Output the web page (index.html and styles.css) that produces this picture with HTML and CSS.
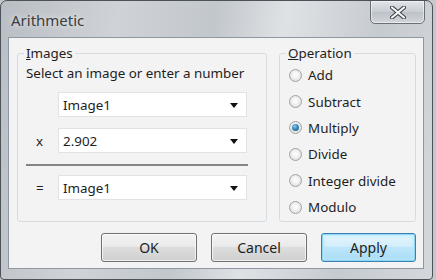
FILE: index.html
```html
<!DOCTYPE html>
<html lang="en">
<head>
    <meta charset="UTF-8">
    <meta name="viewport" content="width=device-width, initial-scale=1.0">
    <title>Arithmetic</title>
    <link rel="stylesheet" href="styles.css">
</head>
<body>
    <div class="window">
        <div class="titlebar">
            <span class="title">Arithmetic</span>
            <button class="close-btn" aria-label="Close">
                <svg width="16" height="13" viewBox="0 0 16 13">
                    <path d="M2 1.5 L14 11.5 M14 1.5 L2 11.5" stroke="#3d4147" stroke-width="4.2" stroke-linecap="round"/>
                    <path d="M2 1.5 L14 11.5 M14 1.5 L2 11.5" stroke="#f4f5f6" stroke-width="2.2" stroke-linecap="round"/>
                </svg>
            </button>
        </div>

        <div class="client">
            <div class="groups">
                <fieldset class="group images-group">
                    <legend><u>I</u>mages</legend>
                    <p class="hint">Select an image or enter a number</p>

                    <div class="operand-row first">
                        <span class="op"></span>
                        <div class="combo"><span>Image1</span><i class="arrow"></i></div>
                    </div>
                    <div class="operand-row">
                        <span class="op">x</span>
                        <div class="combo"><span>2.902</span><i class="arrow"></i></div>
                    </div>
                    <div class="separator"></div>
                    <div class="operand-row result">
                        <span class="op">=</span>
                        <div class="combo"><span>Image1</span><i class="arrow"></i></div>
                    </div>
                </fieldset>

                <fieldset class="group operation-group">
                    <legend><u>O</u>peration</legend>
                    <label class="radio"><span class="dot"></span>Add</label>
                    <label class="radio"><span class="dot"></span>Subtract</label>
                    <label class="radio"><span class="dot checked"></span>Multiply</label>
                    <label class="radio"><span class="dot"></span>Divide</label>
                    <label class="radio"><span class="dot"></span>Integer divide</label>
                    <label class="radio"><span class="dot"></span>Modulo</label>
                </fieldset>
            </div>

            <div class="buttons">
                <button class="btn">OK</button>
                <button class="btn">Cancel</button>
                <button class="btn default">Apply</button>
            </div>
        </div>
    </div>
</body>
</html>
```

FILE: styles.css
```css
body {
    margin: 0;
    background-color: #c4c8cc;
    font-family: "Noto Sans", "Open Sans", sans-serif;
    font-size: 13.4px;
    color: #1e1e1e;
}

.window {
    width: 433px;
    height: 280px;
    box-sizing: border-box;
    border: 1px solid #4c5259;
    border-radius: 7px 7px 4px 4px;
    background: linear-gradient(100deg, #b9bec4 0%, #cfd3d7 25%, #c2c7cc 45%, #dfe2e5 60%, #c6cbd0 80%, #d4d8dc 100%);
    padding: 0 8px 10px 7px;
    overflow: hidden;
}

.titlebar {
    height: 36px;
    display: flex;
    align-items: flex-start;
    justify-content: space-between;
}

.title {
    margin: 9px 0 0 3px;
    font-size: 15px;
    color: #3a3d41;
    text-shadow: 0 0 6px rgba(255, 255, 255, 0.8);
}

.close-btn {
    width: 55px;
    height: 24px;
    margin: -1px -1px 0 0;
    border: 1px solid #6a7077;
    border-radius: 0 0 5px 5px;
    background: linear-gradient(#e2e5e8, #c8cdd2 50%, #bcc2c8 51%, #d2d6da);
    box-shadow: inset 0 0 0 1px rgba(255, 255, 255, 0.5);
    display: flex;
    align-items: center;
    justify-content: center;
    padding: 0;
}

.client {
    height: 232px;
    box-sizing: border-box;
    border: 1px solid #8d98a3;
    background-color: #f3f3f3;
    padding: 7px 7px 0 8px;
}

.groups {
    display: flex;
    gap: 12px;
    height: 177px;
}

.group {
    margin: 0;
    border: 1px solid #d6dde2;
    border-radius: 3px;
    box-sizing: border-box;
    min-width: 0;
    padding: 0 0 0 8px;
}

.group legend {
    padding: 0 2px;
    margin-left: -2px;
    line-height: 16px;
}

.images-group {
    width: 252px;
}

.operation-group {
    width: 138px;
}

.hint {
    margin: 3px 0 0;
    line-height: 18px;
}

.operand-row {
    display: flex;
    align-items: center;
    margin-top: 11px;
}

.operand-row.first {
    margin-top: 10px;
}

.operand-row.result {
    margin-top: 9px;
}

.op {
    width: 32px;
    padding-left: 10px;
    box-sizing: border-box;
}

.combo {
    width: 189px;
    height: 25px;
    box-sizing: border-box;
    border: 1px solid #e2e2e2;
    background-color: #fff;
    display: flex;
    align-items: center;
    justify-content: space-between;
    padding: 0 8px 0 4px;
}

.arrow {
    width: 0;
    height: 0;
    border-left: 4px solid transparent;
    border-right: 4px solid transparent;
    border-top: 5px solid #111;
    margin-top: 1px;
}

.separator {
    width: 222px;
    height: 2px;
    margin-top: 11px;
    background-color: #858585;
}

.radio {
    display: flex;
    align-items: center;
    height: 26.4px;
    gap: 6px;
    padding-left: 1px;
}

.radio:first-of-type {
    margin-top: 1px;
}

.dot {
    width: 13px;
    height: 13px;
    box-sizing: border-box;
    border-radius: 50%;
    border: 1px solid #a2a2a2;
    background: radial-gradient(circle at 50% 45%, #fafafa 20%, #e8e8e8 60%, #d3d3d3 100%);
    display: flex;
    align-items: center;
    justify-content: center;
}

.dot.checked::after {
    content: "";
    width: 7px;
    height: 7px;
    border-radius: 50%;
    background: radial-gradient(circle at 40% 35%, #8fd0f0 0%, #3d8ec0 40%, #1a4f78 100%);
}

.buttons {
    display: flex;
    justify-content: flex-end;
    gap: 14px;
    margin-top: 11px;
}

.btn {
    width: 96px;
    height: 29px;
    border: 1px solid #707070;
    border-radius: 3px;
    background: linear-gradient(#f2f2f2 0%, #ebebeb 45%, #dddddd 50%, #cfcfcf 100%);
    box-shadow: inset 0 0 0 1px rgba(255, 255, 255, 0.7);
    font-family: inherit;
    font-size: 14px;
    color: #1e1e1e;
    padding: 0;
}

.btn.default {
    width: 95px;
    border-color: #3c7fb1;
    background: linear-gradient(#e5f5fc 0%, #d4eefb 45%, #bde6fb 50%, #a8dcf5 100%);
    box-shadow: inset 0 0 0 1px #8fd4f0, inset 0 0 3px 2px rgba(180, 235, 255, 0.8);
}
```
